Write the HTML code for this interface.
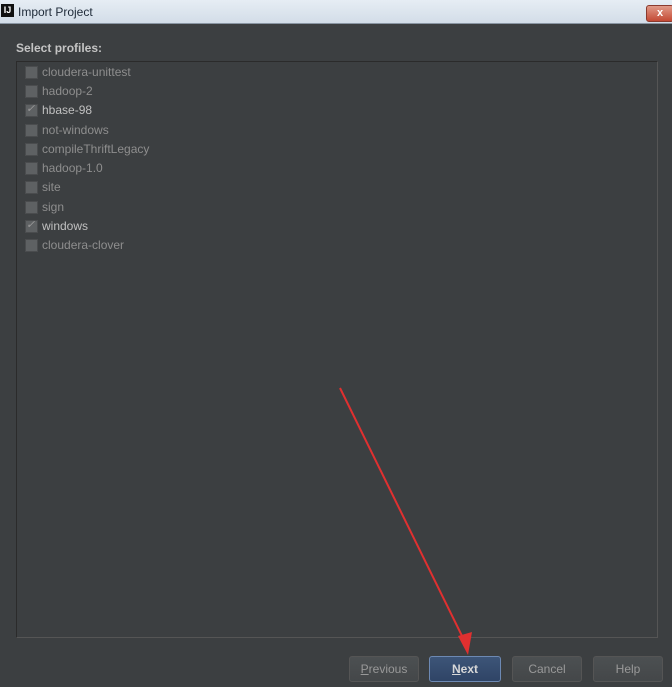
<!DOCTYPE html>
<html><head><style>
body{margin:0;width:672px;height:687px;background:#3c3f41;font-family:"Liberation Sans",sans-serif;position:relative;overflow:hidden}
.title{position:absolute;left:0;top:0;width:672px;height:23px;background:linear-gradient(#e6edf4,#d3dde8);border-bottom:1px solid #8a96a3}
.title span{position:absolute;left:18px;top:5px;font-size:12px;color:#1e2a38}
.logo{position:absolute;left:1px;top:4px;width:13px;height:13px;background:#111;color:#fff;font-size:9px;font-weight:bold;line-height:13px;text-align:center}
.close{position:absolute;left:646px;top:5px;width:26px;height:15px;background:linear-gradient(#e09a88,#c44a35);border:1px solid #8a3a2e;border-radius:3px;color:#fff;font-size:11px;text-align:center;line-height:15px;font-weight:bold}
.lbl{position:absolute;left:16px;top:41px;font-size:12px;font-weight:bold;color:#c4c4c4}
.panel{position:absolute;left:16px;top:61px;width:640px;height:575px;background:#3c3f41;border:1px solid #2b2b2b;border-right-color:#555;border-bottom-color:#555}
.row{position:absolute;left:8px;width:300px;height:19px;font-size:12px;color:#8e8e8e;white-space:nowrap}
.row i{position:absolute;left:0;top:3px;width:11px;height:11px;background:#5e6163;border:1px solid #4a4c4e}
.row span{position:absolute;left:17px;top:2px;white-space:nowrap}
.row.on span{color:#c0c0c0}
.row.on i::after{content:"✓";position:absolute;left:0;top:-3px;font-size:11px;color:#9a9a9a}
.btn{position:absolute;top:656px;height:24px;border:1px solid #555;border-radius:3px;background:linear-gradient(#4c5052,#444749);color:#999;font-size:12px;text-align:center;line-height:24px}
</style></head><body>
<div class="title"><div class="logo">IJ</div><span>Import Project</span><div class="close">x</div></div>
<div class="lbl">Select profiles:</div>
<div class="panel">
<div class="row" style="top:1px"><i></i><span>cloudera-unittest</span></div>
<div class="row" style="top:20px"><i></i><span>hadoop-2</span></div>
<div class="row on" style="top:39px"><i></i><span>hbase-98</span></div>
<div class="row" style="top:59px"><i></i><span>not-windows</span></div>
<div class="row" style="top:78px"><i></i><span>compileThriftLegacy</span></div>
<div class="row" style="top:97px"><i></i><span>hadoop-1.0</span></div>
<div class="row" style="top:116px"><i></i><span>site</span></div>
<div class="row" style="top:136px"><i></i><span>sign</span></div>
<div class="row on" style="top:155px"><i></i><span>windows</span></div>
<div class="row" style="top:174px"><i></i><span>cloudera-clover</span></div>
</div>
<div class="btn" style="left:349px;width:68px"><u>P</u>revious</div>
<div class="btn" style="left:429px;width:70px;background:linear-gradient(#3d5578,#2f4466);border-color:#6d89b3;color:#d8d8d8;font-weight:bold"><u>N</u>ext</div>
<div class="btn" style="left:512px;width:68px">Cancel</div>
<div class="btn" style="left:593px;width:68px">Help</div>
<svg style="position:absolute;left:0;top:0" width="672" height="687">
<line x1="340" y1="388" x2="464" y2="640" stroke="#e03030" stroke-width="2"/>
<polygon points="458,636 472,632 468,655" fill="#e03030"/>
</svg>
</body></html>
